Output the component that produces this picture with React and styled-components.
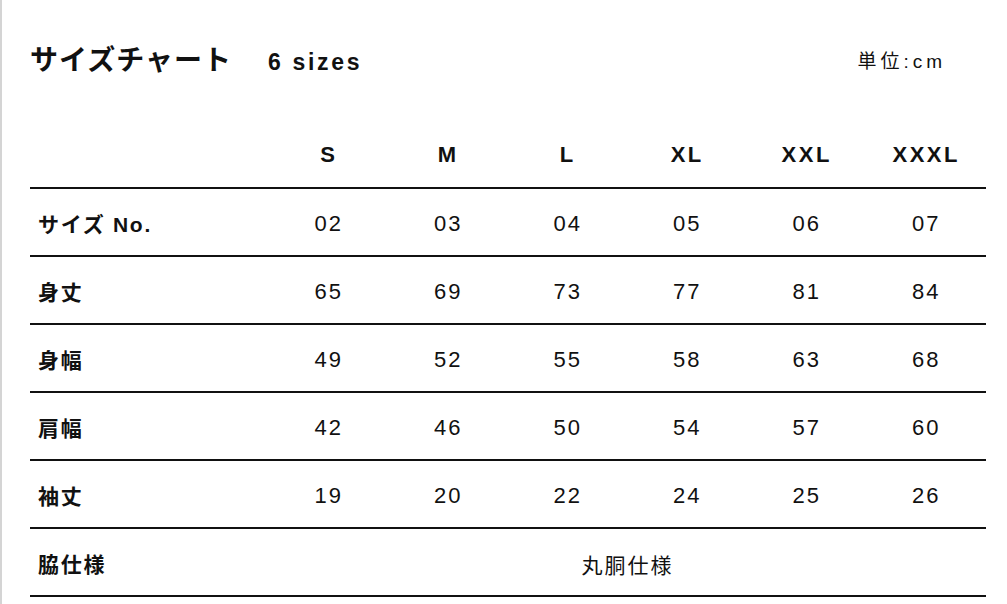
import React from 'react';
import styled, { createGlobalStyle } from 'styled-components';

const sizes = ['S', 'M', 'L', 'XL', 'XXL', 'XXXL'];

const rows = [
  { label: 'サイズ No.', values: ['02', '03', '04', '05', '06', '07'] },
  { label: '身丈', values: ['65', '69', '73', '77', '81', '84'] },
  { label: '身幅', values: ['49', '52', '55', '58', '63', '68'] },
  { label: '肩幅', values: ['42', '46', '50', '54', '57', '60'] },
  { label: '袖丈', values: ['19', '20', '22', '24', '25', '26'] },
];

const GlobalStyle = createGlobalStyle`
  html, body {
    margin: 0;
    padding: 0;
    background: #ffffff;
  }
  body {
    font-family: "Liberation Sans", "Noto Sans CJK JP", sans-serif;
    color: #111111;
  }
`;

const Page = styled.div`
  min-height: 100vh;
  box-sizing: border-box;
  border-left: 2px solid #d4d4d4;
  padding: 39px 21px 0 28px;
`;

const Header = styled.div`
  display: flex;
  align-items: center;
  justify-content: space-between;
  height: 40px;
  padding-right: 40px;
`;

const Title = styled.h1`
  margin: 0;
  display: flex;
  align-items: baseline;
  font-family: "Noto Sans CJK JP", sans-serif;
  font-size: 28px;
  font-weight: 700;
  letter-spacing: 1px;
  line-height: 1;
`;

const Count = styled.span`
  margin-left: 36px;
  font-family: "Liberation Sans", sans-serif;
  font-size: 23px;
  font-weight: 700;
  letter-spacing: 2.7px;
`;

const Unit = styled.div`
  font-family: "Liberation Sans", "Noto Sans CJK JP", sans-serif;
  font-size: 19px;
  letter-spacing: 4px;
`;

const Table = styled.table`
  width: 100%;
  margin-top: 41px;
  border-collapse: collapse;
  table-layout: fixed;
`;

const Row = styled.tr`
  height: 68px;
  border-bottom: 2px solid #111111;
`;

const HeadCell = styled.th`
  padding: 2px 0 0;
  text-align: center;
  font-size: 22px;
  font-weight: 700;
  letter-spacing: 2.5px;
`;

const Label = styled.th`
  padding: 2px 0 0 8px;
  text-align: left;
  font-size: 21px;
  font-weight: 700;
  letter-spacing: 1.7px;
  white-space: nowrap;
`;

const Cell = styled.td`
  padding: 3px 0 0;
  text-align: center;
  font-size: ${p => (p.$text ? '21px' : '22px')};
  font-weight: 400;
  letter-spacing: 2px;
`;

const App = () => (
  <>
    <GlobalStyle />
    <Page>
      <Header>
        <Title>
          サイズチャート
          <Count>6 sizes</Count>
        </Title>
        <Unit>単位:cm</Unit>
      </Header>
      <Table>
        <colgroup>
          <col style={{ width: '25%' }} />
          {sizes.map(s => <col key={s} />)}
        </colgroup>
        <thead>
          <Row>
            <th />
            {sizes.map(s => <HeadCell key={s}>{s}</HeadCell>)}
          </Row>
        </thead>
        <tbody>
          {rows.map(r => (
            <Row key={r.label}>
              <Label>{r.label}</Label>
              {r.values.map((v, i) => <Cell key={i}>{v}</Cell>)}
            </Row>
          ))}
          <Row>
            <Label>脇仕様</Label>
            <Cell colSpan={6} $text>丸胴仕様</Cell>
          </Row>
        </tbody>
      </Table>
    </Page>
  </>
);

export default App;
